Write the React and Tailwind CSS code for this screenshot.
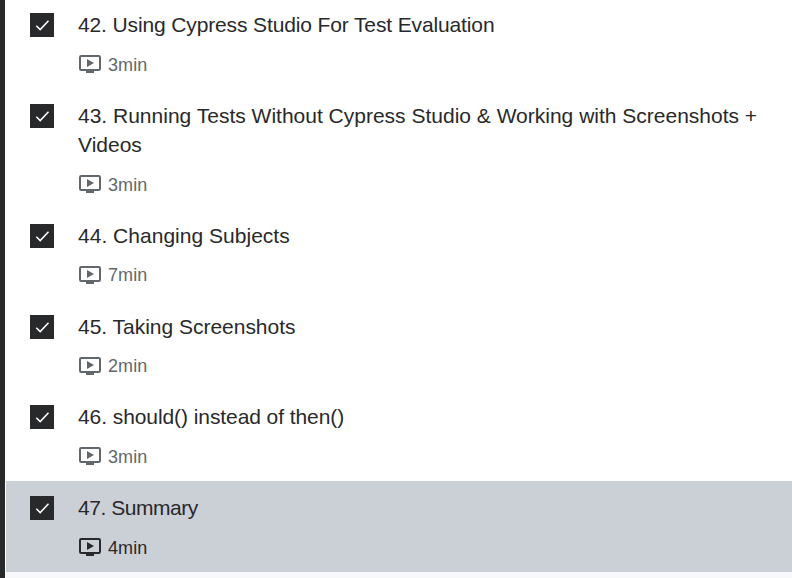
const lectures = [
  { title: '42. Using Cypress Studio For Test Evaluation', time: '3min', spacing: 'tracking-[-0.13px]' },
  { title: '43. Running Tests Without Cypress Studio & Working with Screenshots + Videos', time: '3min', spacing: 'tracking-normal' },
  { title: '44. Changing Subjects', time: '7min', spacing: 'tracking-[0.02px]' },
  { title: '45. Taking Screenshots', time: '2min', spacing: 'tracking-[-0.02px]' },
  { title: '46. should() instead of then()', time: '3min', spacing: 'tracking-[-0.08px]' },
  { title: '47. Summary', time: '4min', spacing: 'tracking-[-0.45px]', active: true },
];

function Checkbox() {
  return (
    <span className="mt-[3px] flex size-6 shrink-0 items-center justify-center bg-[#28292b]">
      <svg className="size-6" viewBox="0 0 24 24" fill="none" stroke="#fff" strokeWidth="1.5">
        <path d="M6.3 12.7l3.9 3.9L18.5 7.8" />
      </svg>
    </span>
  );
}

function VideoIcon() {
  return (
    <svg className="h-[18px] w-[22px] shrink-0" viewBox="0 0 22 18" fill="none">
      <rect x="1" y="1" width="20" height="14" rx="1.2" stroke="currentColor" strokeWidth="2" />
      <path d="M7 15h8v3H7z" fill="currentColor" />
      <path d="M8 4l7 4-7 4z" fill="currentColor" />
    </svg>
  );
}

function Lecture({ title, time, spacing, active }) {
  return (
    <li className={`flex gap-6 pb-[14px] pl-6 pr-6 pt-[11.75px] ${active ? 'bg-[#cbcfd6]' : 'bg-white'}`}>
      <Checkbox />
      <div className="min-w-0 flex-1">
        <p className={`text-[21px] leading-[29px] ${spacing}`}>{title}</p>
        <div className={`mt-[14px] flex h-[22px] items-center gap-[7px] pl-px ${active ? 'text-[#28292b]' : 'text-[#62676c]'}`}>
          <VideoIcon />
          <span className="pt-px text-[18px] leading-[22px] tracking-[0.1px]">{time}</span>
        </div>
      </div>
    </li>
  );
}

export default function App() {
  return (
    <main className="flex h-[578px] w-[792px] overflow-hidden bg-[#f7f8fa] font-['Liberation_Sans',Arial,sans-serif] text-[#28292b]">
      <div className="w-[5px] shrink-0 bg-[#28292b]" />
      <div className="w-px shrink-0 bg-white" />
      <ul className="-mt-[1.5px] flex-1">
        {lectures.map((lecture) => (
          <Lecture key={lecture.title} {...lecture} />
        ))}
      </ul>
    </main>
  );
}
